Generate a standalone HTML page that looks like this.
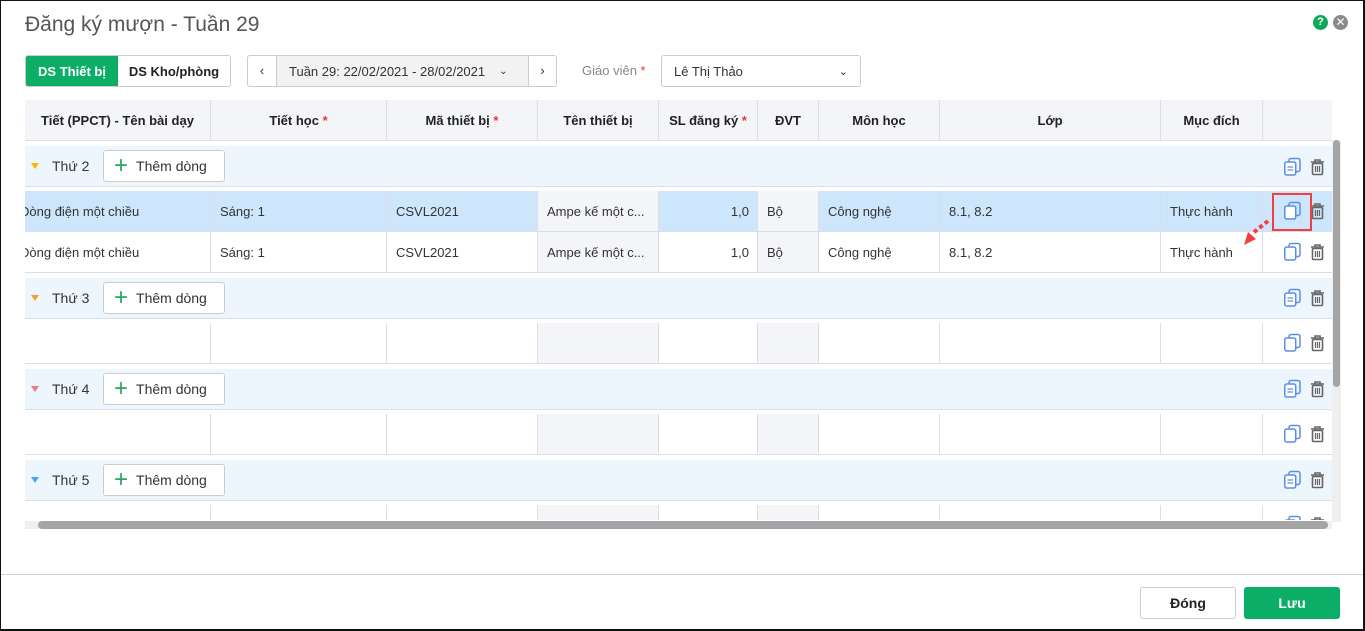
<!DOCTYPE html>
<html><head><meta charset="utf-8"><style>
*{box-sizing:border-box;margin:0;padding:0}
body{width:1365px;height:631px;overflow:hidden;background:#fff;font-family:"Liberation Sans",sans-serif;font-size:13px;color:#333;position:relative}
.frame{position:absolute;left:0;top:0;width:1365px;height:631px;border:2px solid #111;border-top-width:1px;border-left-width:1px}
.abs{position:absolute}
.title{left:25px;top:13px;font-size:21px;color:#555}
.btn{position:absolute;border:1px solid #ccc;border-radius:3px;background:#fff;display:flex;align-items:center;justify-content:center}
.tbl{position:absolute;left:25px;top:100px;width:1307px;height:420px;overflow:hidden}
.row{position:absolute;left:0;width:1307px;display:flex}
.row>div{flex:none;height:100%;display:flex;align-items:center;padding-left:9px;white-space:nowrap;overflow:hidden;border-right:1px solid #dcdde6}
.row>div.f{padding-left:0}
.f span{margin-left:-5px}
.hd{top:0;height:41px;background:#f4f5f9;border-bottom:1px solid #dcdde6}
.hd>div{justify-content:center;padding:0;font-weight:bold;color:#222}
.st{color:#e33}
.grp{height:41px;background:#eef6fd;border-bottom:1px solid #dcdde6}
.dr{height:41px;border-bottom:1px solid #dcdde6;background:#fff}
.dr .g{background:#f4f5f9}
.sel{background:#cde6fb}
.tri{position:absolute;left:6px;width:0;height:0;border-left:4px solid transparent;border-right:4px solid transparent;border-top:6px solid}
.add{position:absolute;left:78px;top:4px;width:122px;height:32px;border:1px solid #ccc;border-radius:3px;background:#fff;display:flex;align-items:center;font-size:14px}
.add .p{color:#2aa860;font-size:24px;margin:0 8px 0 10px;line-height:1;font-weight:300}
</style></head><body>
<div class="frame"></div>
<div class="abs title">Đăng ký mượn - Tuần 29</div>
<div class="abs" style="left:1313px;top:15px;width:15px;height:15px;border-radius:50%;background:#0fa958;color:#fff;font-size:11px;font-weight:bold;text-align:center;line-height:15px">?</div>
<div class="abs" style="left:1333px;top:15px;width:15px;height:15px;border-radius:50%;background:#8a8a8a;color:#fff;font-size:12px;text-align:center;line-height:15px">✕</div>

<div class="btn" style="left:25px;top:55px;width:206px;height:32px;overflow:hidden;justify-content:flex-start">
<div style="width:92px;height:100%;background:#0bad67;color:#fff;font-weight:bold;display:flex;align-items:center;justify-content:center">DS Thiết bị</div>
<div style="flex:1;text-align:center;font-weight:bold;color:#222">DS Kho/phòng</div></div>
<div class="btn" style="left:247px;top:55px;width:310px;height:32px;justify-content:flex-start;overflow:hidden">
<div style="width:29px;text-align:center;border-right:1px solid #ccc;height:100%;line-height:30px">‹</div>
<div style="width:251px;height:100%;background:#f2f2f2;display:flex;align-items:center;padding-left:12px">Tuần 29: 22/02/2021 - 28/02/2021<span style="margin-left:14px;font-size:10px">⌄</span></div>
<div style="flex:1;text-align:center;border-left:1px solid #ccc;height:100%;line-height:30px">›</div></div>
<div class="abs" style="left:582px;top:63px;color:#888">Giáo viên <span class="st">*</span></div>
<div class="btn" style="left:661px;top:55px;width:200px;height:32px;justify-content:space-between;padding:0 12px">Lê Thị Thảo<span style="font-size:11px">⌄</span></div>

<div class="tbl">
<div class="row hd"><div style="width:186px">Tiết (PPCT) - Tên bài dạy</div><div style="width:176px">Tiết học&nbsp;<span class="st">*</span></div><div style="width:151px">Mã thiết bị&nbsp;<span class="st">*</span></div><div style="width:121px">Tên thiết bị</div><div style="width:99px">SL đăng ký&nbsp;<span class="st">*</span></div><div style="width:61px">ĐVT</div><div style="width:121px">Môn học</div><div style="width:221px">Lớp</div><div style="width:102px">Mục đích</div><div style="width:69px;border:0"></div></div>

<div class="row grp" style="top:46px"><span class="tri" style="top:17px;border-top-color:#f5b800"></span><span class="abs" style="left:27px;top:12px;font-size:14px">Thứ 2</span><span class="add"><span class="p">+</span>Thêm dòng</span></div>
<div class="row dr sel" style="top:91px"><div class="f" style="width:186px"><span>Dòng điện một chiều</span></div><div style="width:176px">Sáng: 1</div><div style="width:151px">CSVL2021</div><div class="g" style="width:121px">Ampe kế một c...</div><div style="width:99px;justify-content:flex-end;padding-right:8px">1,0</div><div class="g" style="width:61px">Bộ</div><div style="width:121px">Công nghệ</div><div style="width:221px">8.1, 8.2</div><div style="width:102px">Thực hành</div></div>
<div class="row dr" style="top:132px"><div class="f" style="width:186px"><span>Dòng điện một chiều</span></div><div style="width:176px">Sáng: 1</div><div style="width:151px">CSVL2021</div><div class="g" style="width:121px">Ampe kế một c...</div><div style="width:99px;justify-content:flex-end;padding-right:8px">1,0</div><div class="g" style="width:61px">Bộ</div><div style="width:121px">Công nghệ</div><div style="width:221px">8.1, 8.2</div><div style="width:102px">Thực hành</div></div>

<div class="row grp" style="top:178px"><span class="tri" style="top:17px;border-top-color:#f39b3a"></span><span class="abs" style="left:27px;top:12px;font-size:14px">Thứ 3</span><span class="add"><span class="p">+</span>Thêm dòng</span></div>
<div class="row dr" style="top:223px"><div style="width:186px"></div><div style="width:176px"></div><div style="width:151px"></div><div class="g" style="width:121px"></div><div style="width:99px"></div><div class="g" style="width:61px"></div><div style="width:121px"></div><div style="width:221px"></div><div style="width:102px"></div></div>

<div class="row grp" style="top:269px"><span class="tri" style="top:17px;border-top-color:#ee7b7b"></span><span class="abs" style="left:27px;top:12px;font-size:14px">Thứ 4</span><span class="add"><span class="p">+</span>Thêm dòng</span></div>
<div class="row dr" style="top:314px"><div style="width:186px"></div><div style="width:176px"></div><div style="width:151px"></div><div class="g" style="width:121px"></div><div style="width:99px"></div><div class="g" style="width:61px"></div><div style="width:121px"></div><div style="width:221px"></div><div style="width:102px"></div></div>

<div class="row grp" style="top:360px"><span class="tri" style="top:17px;border-top-color:#4ba8e8"></span><span class="abs" style="left:27px;top:12px;font-size:14px">Thứ 5</span><span class="add"><span class="p">+</span>Thêm dòng</span></div>
<div class="row dr" style="top:405px"><div style="width:186px"></div><div style="width:176px"></div><div style="width:151px"></div><div class="g" style="width:121px"></div><div style="width:99px"></div><div class="g" style="width:61px"></div><div style="width:121px"></div><div style="width:221px"></div><div style="width:102px"></div></div>

<svg class="abs" style="left:0;top:0" width="1307" height="420">
<defs>
<g id="cpl"><rect x="5" y="0.5" width="11" height="13" rx="2" fill="none" stroke="#5b8de6" stroke-width="1.5"/><rect x="0.75" y="4" width="11" height="13" rx="2" fill="#fff" stroke="#5b8de6" stroke-width="1.5"/><path d="M3.5 9h5.5M3.5 12h5.5" stroke="#5b8de6" stroke-width="1.3"/></g>
<g id="cp"><rect x="5" y="0.5" width="11" height="13" rx="2" fill="none" stroke="#5b8de6" stroke-width="1.5"/><rect x="0.75" y="4" width="11" height="13" rx="2" fill="#fff" stroke="#5b8de6" stroke-width="1.5"/></g>
<g id="tr"><path d="M1 3h13M5 3V1h5v2" stroke="#666" stroke-width="1.6" fill="none"/><rect x="2.5" y="4.5" width="10" height="11" rx="1" fill="none" stroke="#666" stroke-width="1.6"/><path d="M5.5 7v6M7.5 7v6M9.5 7v6" stroke="#666" stroke-width="1.2"/></g>
</defs>
<use href="#cpl" x="1259" y="58"/><use href="#tr" x="1285" y="59"/>
<use href="#cp" x="1259" y="102"/><use href="#tr" x="1285" y="103"/>
<use href="#cp" x="1259" y="143"/><use href="#tr" x="1285" y="144"/>
<use href="#cpl" x="1259" y="189"/><use href="#tr" x="1285" y="190"/>
<use href="#cp" x="1259" y="234"/><use href="#tr" x="1285" y="235"/>
<use href="#cpl" x="1259" y="280"/><use href="#tr" x="1285" y="281"/>
<use href="#cp" x="1259" y="325"/><use href="#tr" x="1285" y="326"/>
<use href="#cpl" x="1259" y="371"/><use href="#tr" x="1285" y="372"/>
<use href="#cp" x="1259" y="416"/><use href="#tr" x="1285" y="417"/>
</svg>
</div>
<div class="abs" style="left:1272px;top:193px;width:40px;height:38px;border:2px solid #f04040"></div>
<svg class="abs" style="left:1238px;top:218px" width="40" height="32"><path d="M30 3 L15 15" stroke="#f04040" stroke-width="4" stroke-dasharray="4 3"/><path d="M6 27 L10 14 L18 21 Z" fill="#f04040"/></svg>
<div class="abs" style="left:25px;top:521px;width:1307px;height:8px;background:#efefef"></div>
<div class="abs" style="left:38px;top:521px;width:1290px;height:8px;background:#a5a5a5;border-radius:4px"></div>
<div class="abs" style="left:1332px;top:140px;width:9px;height:382px;background:#efefef"></div>
<div class="abs" style="left:1333px;top:140px;width:7px;height:247px;background:#a5a5a5;border-radius:4px"></div>
<div class="abs" style="left:1px;top:574px;width:1362px;height:1px;background:#d0d0d0"></div>
<div class="btn" style="left:1140px;top:587px;width:96px;height:32px;font-size:14px;font-weight:bold;color:#222">Đóng</div>
<div class="btn" style="left:1244px;top:587px;width:96px;height:32px;background:#0bad67;border-color:#0bad67;color:#fff;font-size:14px;font-weight:bold">Lưu</div>
</body></html>
